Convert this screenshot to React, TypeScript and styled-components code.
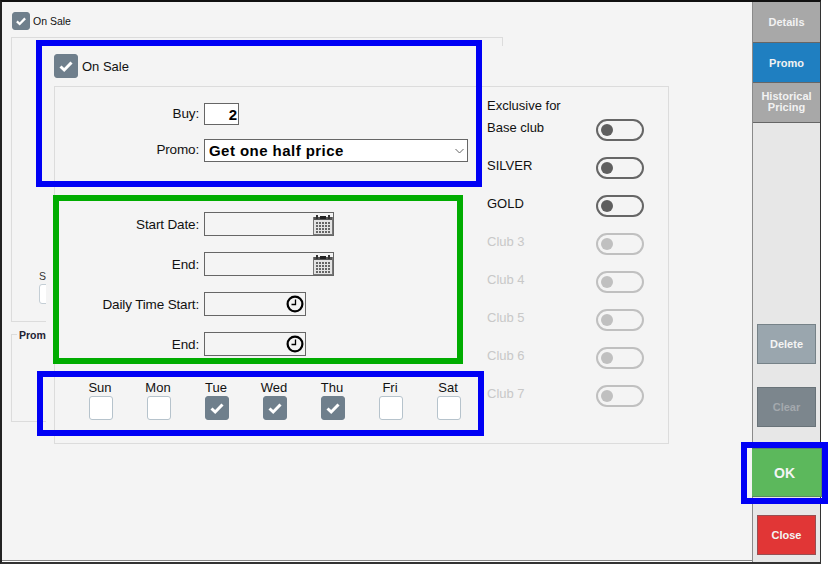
import React from "react";
import styled, { createGlobalStyle } from "styled-components";

const GlobalStyle = createGlobalStyle`
  html, body {
    margin: 0;
    padding: 0;
    background: #fff;
    font-family: "Liberation Sans", Arial, sans-serif;
    color: #111;
  }
`;

const Page = styled.div`
  position: relative;
  width: 828px;
  height: 564px;
  overflow: hidden;
  background: #fff;
`;

const Window = styled.div`
  display: flex;
  box-sizing: border-box;
  width: 821px;
  height: 564px;
  border-top: 2px solid #111;
  border-left: 2px solid #222;
  border-right: 1px solid #333;
  border-bottom: 2px solid #333;
`;

const Main = styled.div`
  position: relative;
  box-sizing: border-box;
  width: 750px;
  height: 559px;
  padding: 10px 0 0 10px;
  background: #f4f4f4;
  border-bottom: 1px solid #888;
`;

const CheckRow = styled.div<{ $small?: boolean }>`
  display: flex;
  align-items: center;
  gap: ${(p) => (p.$small ? 3 : 4)}px;
  font-size: ${(p) => (p.$small ? 10.5 : 13)}px;
`;

const Box = styled.div<{ $checked?: boolean; $size?: number }>`
  display: flex;
  align-items: center;
  justify-content: center;
  box-sizing: border-box;
  flex: none;
  width: ${(p) => p.$size ?? 24}px;
  height: ${(p) => p.$size ?? 24}px;
  border-radius: 3px;
  background: ${(p) => (p.$checked ? "#6f7f8c" : "#fff")};
  border: 1px solid ${(p) => (p.$checked ? "#6f7f8c" : "#b6c3cc")};
`;

const BackGroup = styled.div`
  position: relative;
  box-sizing: border-box;
  width: 492px;
  height: 285px;
  margin: 7px 0 0 -1px;
  border: 1px solid #dcdcdc;
`;

const BackField = styled.div`
  position: absolute;
  left: 27px;
  top: 232px;
  font-size: 10.5px;
  color: #333;
`;

const BackInput = styled.div`
  width: 24px;
  height: 18px;
  margin-top: 2px;
  background: #fff;
  border: 1px solid #c4ced5;
  border-radius: 3px;
`;

const PromGroup = styled.div`
  position: relative;
  box-sizing: border-box;
  width: 492px;
  height: 88px;
  margin: 12px 0 0 -1px;
  border: 1px solid #dcdcdc;
`;

const PromLegend = styled.span`
  position: absolute;
  left: 5px;
  top: -6px;
  padding: 0 2px;
  background: #f4f4f4;
  font-size: 10.5px;
  font-weight: bold;
  color: #223;
`;

const Overlay = styled.div`
  position: absolute;
  left: 44px;
  top: 44px;
  right: 0;
  bottom: 0;
  padding: 8px 0 0 8px;
  background: #f4f4f4;
`;

const Panel = styled.div`
  display: flex;
  box-sizing: border-box;
  width: 615px;
  height: 358px;
  margin-top: 8px;
  border: 1px solid #dcdcdc;
`;

const FormColumn = styled.div`
  display: flex;
  flex-direction: column;
  box-sizing: border-box;
  width: 432px;
  padding-top: 16px;
`;

const FieldRow = styled.div<{ $gap?: number }>`
  display: flex;
  align-items: center;
  gap: 5px;
  margin-top: ${(p) => p.$gap ?? 0}px;
`;

const FieldLabel = styled.div<{ $lift?: boolean }>`
  width: 144px;
  padding-bottom: ${(p) => (p.$lift ? 2 : 0)}px;
  text-align: right;
  font-size: 13.5px;
  letter-spacing: -0.15px;
`;

const Field = styled.div<{ $width: number; $height?: number; $white?: boolean }>`
  display: flex;
  align-items: center;
  justify-content: flex-end;
  box-sizing: border-box;
  width: ${(p) => p.$width}px;
  height: ${(p) => p.$height ?? 24}px;
  background: ${(p) => (p.$white ? "#fff" : "#f4f4f4")};
  border: 1px solid #666;
  font-size: 15px;
  font-weight: bold;
  color: #000;
`;

const BuyValue = styled.span`
  padding-right: 1px;
`;

const PromoValue = styled.span`
  flex: 1;
  padding-left: 4px;
  letter-spacing: 0.45px;
`;

const DaysRow = styled.div`
  display: flex;
  margin-top: 23px;
  padding-left: 17px;
`;

const DayCell = styled.div`
  display: flex;
  flex-direction: column;
  align-items: center;
  width: 58px;
  font-size: 13px;
  line-height: 17px;
`;

const DayName = styled.span`
  margin-left: -2px;
`;

const ClubsColumn = styled.div`
  padding-top: 8px;
  font-size: 13px;
  line-height: 22px;
`;

const ClubRow = styled.div<{ $off?: boolean }>`
  display: grid;
  grid-template-columns: 109px 48px;
  height: 38px;
  color: ${(p) => (p.$off ? "#c8c8c8" : "#111")};
`;

const Toggle = styled.div<{ $off?: boolean }>`
  display: flex;
  align-items: center;
  box-sizing: border-box;
  width: 48px;
  height: 22px;
  margin-top: 2px;
  padding-left: 3px;
  border: 2px solid ${(p) => (p.$off ? "#c0c0c0" : "#666")};
  border-radius: 11px;
`;

const Knob = styled.div<{ $off?: boolean }>`
  width: 12px;
  height: 12px;
  border-radius: 50%;
  background: ${(p) => (p.$off ? "#c0c0c0" : "#5f5f5f")};
`;

const Sidebar = styled.div`
  display: flex;
  flex-direction: column;
  box-sizing: border-box;
  width: 68px;
  border-left: 1px solid #8a8a8a;
  background: #e7e7e7;
`;

const Tab = styled.div<{ $active?: boolean; $height: number; $twoLine?: boolean }>`
  display: flex;
  align-items: center;
  justify-content: center;
  box-sizing: border-box;
  height: ${(p) => p.$height}px;
  padding-bottom: ${(p) => (p.$twoLine ? 1 : 0)}px;
  padding-top: ${(p) => (p.$twoLine ? 0 : 1)}px;
  background: ${(p) => (p.$active ? "#1f7fc1" : "#a8a8a8")};
  border-bottom: 1px solid #666;
  color: #f2f2f2;
  font-size: 11px;
  font-weight: bold;
  line-height: 11px;
  text-align: center;
`;

const Actions = styled.div`
  display: flex;
  flex-direction: column;
  align-items: center;
  margin-top: auto;
  padding-bottom: 7px;
`;

const ActionButton = styled.div<{ $bg: string; $fg?: string; $gap: number; $wide?: boolean }>`
  display: flex;
  align-items: center;
  justify-content: center;
  flex: none;
  box-sizing: border-box;
  width: ${(p) => (p.$wide ? 75 : 59)}px;
  height: ${(p) => (p.$wide ? 49 : 40)}px;
  margin-top: ${(p) => p.$gap}px;
  margin-left: ${(p) => (p.$wide ? -4 : 0)}px;
  background: ${(p) => p.$bg};
  border: 1px solid rgba(90, 100, 105, 0.55);
  color: ${(p) => p.$fg ?? "#f4f4f4"};
  font-size: ${(p) => (p.$wide ? 14 : 11)}px;
  font-weight: bold;
`;

const Highlight = styled.div<{ $x: number; $y: number; $w: number; $h: number; $color: string }>`
  position: absolute;
  box-sizing: border-box;
  left: ${(p) => p.$x}px;
  top: ${(p) => p.$y}px;
  width: ${(p) => p.$w}px;
  height: ${(p) => p.$h}px;
  border: 6px solid ${(p) => p.$color};
`;

const Check = ({ size = 16 }: { size?: number }) => (
  <svg width={size} height={size} viewBox="0 0 16 16">
    <path d="M2.5 8.5 L6.2 12 L13.5 4.5" fill="none" stroke="#fff" strokeWidth="3" />
  </svg>
);

const Chevron = () => (
  <svg width="9" height="6" viewBox="0 0 9 6">
    <path d="M0.5 1 L4.5 5 L8.5 1" fill="none" stroke="#666" strokeWidth="1" />
  </svg>
);

const CalendarIcon = () => (
  <svg width="20" height="21" viewBox="0 0 20 21">
    <rect x="0.5" y="3.5" width="19" height="17" fill="#e4e4e4" stroke="#777" />
    <rect x="1" y="3" width="18" height="3" fill="#555" />
    <rect x="3" y="1" width="2" height="4" fill="#333" />
    <rect x="15" y="1" width="2" height="4" fill="#333" />
    <rect x="7" y="2" width="6" height="3" fill="#222" />
    {[8, 11, 14, 17].map((y) =>
      [3, 6, 9, 12, 15].map((x) => (
        <rect key={`${x}-${y}`} x={x} y={y} width="2" height="2" fill="#666" />
      ))
    )}
  </svg>
);

const ClockIcon = () => (
  <svg width="18" height="18" viewBox="0 0 18 18">
    <circle cx="9" cy="9" r="7.4" fill="#f4f4f4" stroke="#000" strokeWidth="2.2" />
    <path d="M9.5 4.5 V9.5 H5.5" fill="none" stroke="#000" strokeWidth="1.3" />
  </svg>
);

const IconSlot = styled.span<{ $right: number }>`
  display: flex;
  margin-right: ${(p) => p.$right}px;
`;

const days = [
  { name: "Sun", on: false },
  { name: "Mon", on: false },
  { name: "Tue", on: true },
  { name: "Wed", on: true },
  { name: "Thu", on: true },
  { name: "Fri", on: false },
  { name: "Sat", on: false },
];

const clubs = [
  { name: "Base club", off: false },
  { name: "SILVER", off: false },
  { name: "GOLD", off: false },
  { name: "Club 3", off: true },
  { name: "Club 4", off: true },
  { name: "Club 5", off: true },
  { name: "Club 6", off: true },
  { name: "Club 7", off: true },
];

export default function App() {
  return (
    <Page>
      <GlobalStyle />
      <Window>
        <Main>
          <CheckRow $small>
            <Box $checked $size={18}>
              <Check size={12} />
            </Box>
            On Sale
          </CheckRow>
          <BackGroup>
            <BackField>
              S
              <BackInput />
            </BackField>
          </BackGroup>
          <PromGroup>
            <PromLegend>Promotion</PromLegend>
          </PromGroup>

          <Overlay>
            <CheckRow>
              <Box $checked>
                <Check />
              </Box>
              On Sale
            </CheckRow>
            <Panel>
              <FormColumn>
                <FieldRow>
                  <FieldLabel $lift>Buy:</FieldLabel>
                  <Field $width={35} $height={22} $white>
                    <BuyValue>2</BuyValue>
                  </Field>
                </FieldRow>
                <FieldRow $gap={14}>
                  <FieldLabel $lift>Promo:</FieldLabel>
                  <Field $width={264} $height={23} $white>
                    <PromoValue>Get one half price</PromoValue>
                    <IconSlot $right={3}>
                      <Chevron />
                    </IconSlot>
                  </Field>
                </FieldRow>
                <FieldRow $gap={50}>
                  <FieldLabel>Start Date:</FieldLabel>
                  <Field $width={130}>
                    <IconSlot $right={0}>
                      <CalendarIcon />
                    </IconSlot>
                  </Field>
                </FieldRow>
                <FieldRow $gap={16}>
                  <FieldLabel>End:</FieldLabel>
                  <Field $width={130}>
                    <IconSlot $right={0}>
                      <CalendarIcon />
                    </IconSlot>
                  </Field>
                </FieldRow>
                <FieldRow $gap={16}>
                  <FieldLabel>Daily Time Start:</FieldLabel>
                  <Field $width={102}>
                    <IconSlot $right={1}>
                      <ClockIcon />
                    </IconSlot>
                  </Field>
                </FieldRow>
                <FieldRow $gap={16}>
                  <FieldLabel>End:</FieldLabel>
                  <Field $width={102}>
                    <IconSlot $right={1}>
                      <ClockIcon />
                    </IconSlot>
                  </Field>
                </FieldRow>
                <DaysRow>
                  {days.map((d) => (
                    <DayCell key={d.name}>
                      <DayName>{d.name}</DayName>
                      <Box $checked={d.on}>{d.on && <Check />}</Box>
                    </DayCell>
                  ))}
                </DaysRow>
              </FormColumn>
              <ClubsColumn>
                Exclusive for
                {clubs.map((c) => (
                  <ClubRow key={c.name} $off={c.off}>
                    {c.name}
                    <Toggle $off={c.off}>
                      <Knob $off={c.off} />
                    </Toggle>
                  </ClubRow>
                ))}
              </ClubsColumn>
            </Panel>
          </Overlay>
        </Main>

        <Sidebar>
          <Tab $height={41}>Details</Tab>
          <Tab $active $height={40}>Promo</Tab>
          <Tab $height={40} $twoLine>
            Historical
            <br />
            Pricing
          </Tab>
          <Actions>
            <ActionButton $bg="#9aa6ae" $gap={0}>Delete</ActionButton>
            <ActionButton $bg="#7c868d" $fg="#a4a9ad" $gap={23}>Clear</ActionButton>
            <ActionButton $bg="#5cb85c" $gap={21} $wide>OK</ActionButton>
            <ActionButton $bg="#e13636" $gap={18}>Close</ActionButton>
          </Actions>
        </Sidebar>
      </Window>

      <Highlight $x={36} $y={40} $w={446} $h={147} $color="#0000f5" />
      <Highlight $x={53} $y={195} $w={410} $h={169} $color="#00ac00" />
      <Highlight $x={37} $y={371} $w={447} $h={65} $color="#0000f5" />
      <Highlight $x={741} $y={442} $w={87} $h={62} $color="#0000f5" />
    </Page>
  );
}
